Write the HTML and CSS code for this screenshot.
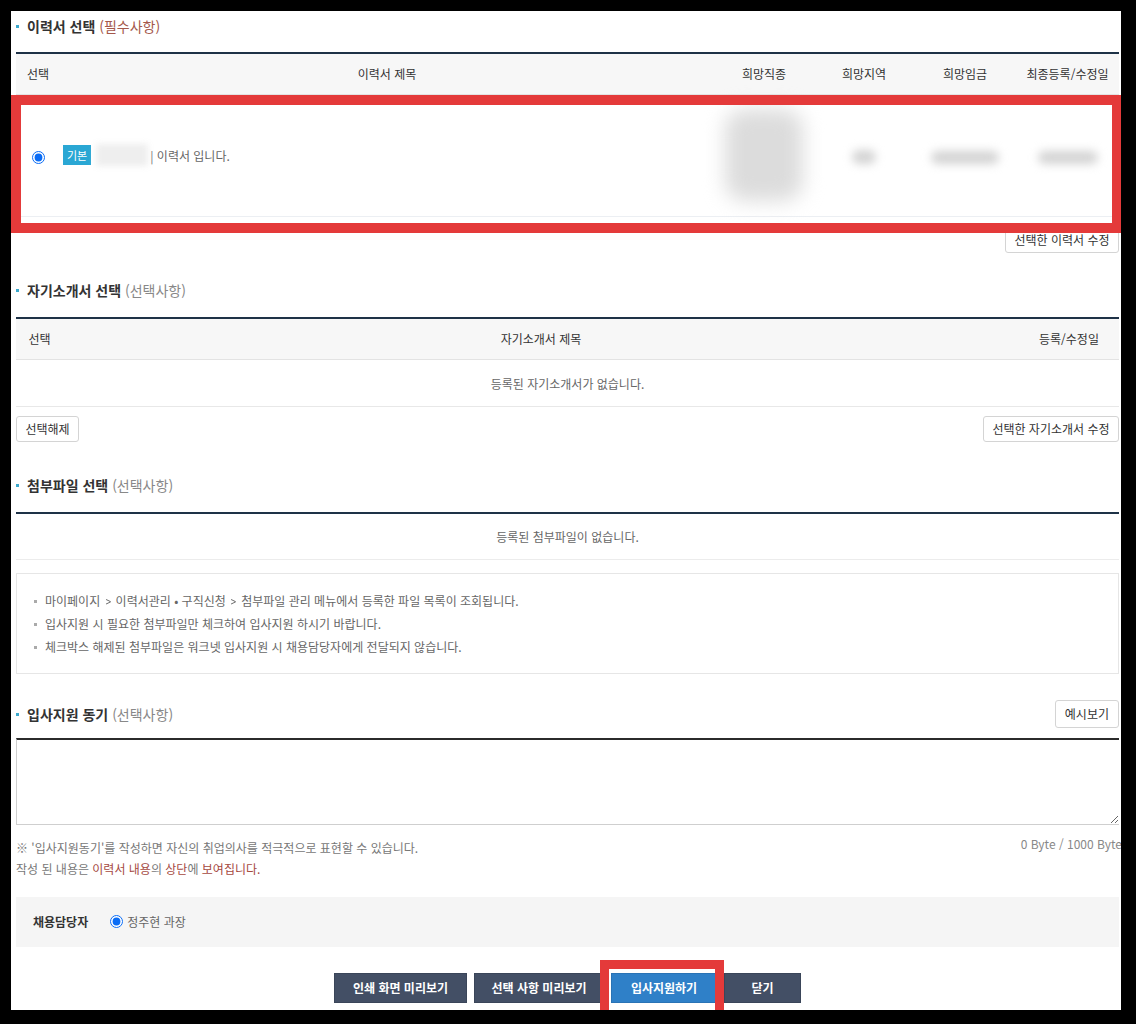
FILE: index.html
```html
<!DOCTYPE html>
<html lang="ko">
<head>
<meta charset="utf-8">
<title>입사지원</title>
<link rel="stylesheet" href="styles.css">
</head>
<body>
<div class="frame">
  <div class="page">

    <section class="sec sec-resume">
      <h2 class="sec-title">이력서 선택 <span class="req">(필수사항)</span></h2>
      <div class="table-wrap">
        <table class="list list-resume">
          <colgroup>
            <col class="c-sel"><col><col class="c-100"><col class="c-100"><col class="c-102"><col class="c-103">
          </colgroup>
          <thead>
            <tr><th>선택</th><th>이력서 제목</th><th>희망직종</th><th>희망지역</th><th>희망임금</th><th>최종등록/수정일</th></tr>
          </thead>
          <tbody>
            <tr class="resume-row">
              <td><input type="radio" class="radio" name="resume" checked></td>
              <td class="left"><span class="tag">기본</span><span class="blur-name"></span><span class="resume-name">| 이력서 입니다.</span></td>
              <td><span class="blur blur-job"></span></td>
              <td><span class="blur blur-area"></span></td>
              <td><span class="blur blur-pay"></span></td>
              <td><span class="blur blur-date"></span></td>
            </tr>
          </tbody>
        </table>
        <div class="mark mark-resume"></div>
      </div>
      <div class="btn-row end"><button class="btn-line">선택한 이력서 수정</button></div>
    </section>

    <section class="sec sec-intro">
      <h2 class="sec-title">자기소개서 선택 <span class="opt">(선택사항)</span></h2>
      <table class="list list-intro">
        <colgroup><col class="c-sel2"><col><col class="c-100"></colgroup>
        <thead><tr><th>선택</th><th>자기소개서 제목</th><th>등록/수정일</th></tr></thead>
        <tbody><tr class="empty-row"><td colspan="3">등록된 자기소개서가 없습니다.</td></tr></tbody>
      </table>
      <div class="btn-row between"><button class="btn-line">선택해제</button><button class="btn-line">선택한 자기소개서 수정</button></div>
    </section>

    <section class="sec sec-file">
      <h2 class="sec-title">첨부파일 선택 <span class="opt">(선택사항)</span></h2>
      <table class="list list-file">
        <tbody><tr class="empty-row file-row"><td>등록된 첨부파일이 없습니다.</td></tr></tbody>
      </table>
      <ul class="info-box">
        <li>마이페이지 <span class="chev">&gt;</span> 이력서관리 • 구직신청 <span class="chev">&gt;</span> 첨부파일 관리 메뉴에서 등록한 파일 목록이 조회됩니다.</li>
        <li>입사지원 시 필요한 첨부파일만 체크하여 입사지원 하시기 바랍니다.</li>
        <li>체크박스 해제된 첨부파일은 워크넷 입사지원 시 채용담당자에게 전달되지 않습니다.</li>
      </ul>
    </section>

    <section class="sec sec-motive">
      <div class="title-row">
        <h2 class="sec-title">입사지원 동기 <span class="opt">(선택사항)</span></h2>
        <button class="btn-line btn-example">예시보기</button>
      </div>
      <textarea class="motive"></textarea>
      <div class="note-row">
        <div class="notes">
          <p>※ '입사지원동기'를 작성하면 자신의 취업의사를 적극적으로 표현할 수 있습니다.</p>
          <p>작성 된 내용은 <span class="red">이력서 내용</span>의 <span class="red">상단</span>에 <span class="red">보여집니다.</span></p>
        </div>
        <div class="bytes">0 Byte / 1000 Byte</div>
      </div>
    </section>

    <div class="manager">
      <span class="manager-label">채용담당자</span>
      <label class="manager-opt"><input type="radio" class="radio" name="mgr" checked>정주현 과장</label>
    </div>

    <div class="actions">
      <button class="btn-dark b-print">인쇄 화면 미리보기</button>
      <button class="btn-dark b-sel">선택 사항 미리보기</button>
      <button class="btn-blue b-apply">입사지원하기</button>
      <button class="btn-dark b-close">닫기</button>
    </div>

  </div>
</div>
</body>
</html>
```

FILE: styles.css
```css
*, *::before, *::after { box-sizing: border-box; }
html, body { margin: 0; padding: 0; background: #000; }
body { font-family: "Noto Sans CJK KR", "Noto Sans", sans-serif; font-size: 12px; color: #333; }

.frame {
  width: 1110px;
  height: 999px;
  margin: 11px 0 0 11px;
  background: #fff;
  overflow: hidden;
}
.page { width: 1108px; padding: 5px 0 0 5px; }
.page > * { width: 1103px; }

.sec-title {
  position: relative;
  margin: 0;
  padding-left: 11px;
  font-size: 14px;
  line-height: 20px;
  font-weight: 700;
  color: #333;
}
.sec-title::before {
  content: "";
  position: absolute;
  left: 0; top: 9px;
  width: 3px; height: 3px;
  background: #3aa8cc;
}
.req { color: #a4584b; font-weight: 400; }
.opt { color: #888; font-weight: 400; }

.list {
  width: 100%;
  border-collapse: collapse;
  table-layout: fixed;
  border-top: 2px solid #1e3247;
  margin-top: 16px;
}
.list th {
  height: 41px;
  padding: 0;
  background: #f7f7f7;
  font-weight: 400;
  color: #333;
  border-bottom: 1px solid #e3e3e3;
  text-align: center;
}
.list td { padding: 0; text-align: center; color: #666; }
.c-sel { width: 44px; }
.c-sel2 { width: 47px; }
.c-100 { width: 100px; }
.c-102 { width: 102px; }
.c-103 { width: 103px; }

.resume-row td { height: 122px; border-bottom: 1px solid #eceff3; }
.resume-row td.left { text-align: left; padding-left: 3px; }
.radio {
  width: 13px; height: 13px; margin: 0;
  vertical-align: middle;
  accent-color: #0a6cf5;
}
.tag {
  display: inline-block;
  vertical-align: middle;
  height: 20px;
  line-height: 20px;
  padding: 0 4px;
  background: #2aa7d4;
  color: #fff;
  font-size: 11px;
}
.blur-name {
  display: inline-block;
  vertical-align: middle;
  width: 52px; height: 22px;
  margin: 0 2px 0 5px;
  background: #eeeeee;
  filter: blur(3px);
}
.resume-name { vertical-align: middle; color: #666; }
.blur { display: inline-block; vertical-align: middle; background: #d3d3d3; border-radius: 8px; }
.blur-job { width: 78px; height: 92px; background: #dcdcdc; border-radius: 20px; filter: blur(10px); }
.blur-area { width: 24px; height: 14px; filter: blur(5px); }
.blur-pay { width: 68px; height: 13px; filter: blur(5px); }
.blur-date { width: 60px; height: 13px; filter: blur(5px); }

.table-wrap { position: relative; }
.mark {
  position: absolute;
  border: 10px solid #e43a3a;
  pointer-events: none;
}
.mark-resume { left: -5px; top: 43px; width: 1111px; height: 138px; }

.btn-row { display: flex; }
.btn-row.end { justify-content: flex-end; margin-top: 10px; }
.btn-row.between { justify-content: space-between; margin-top: 9px; }
.btn-line {
  height: 26px;
  padding: 0 8.5px;
  border: 1px solid #d4d4d4;
  border-radius: 3px;
  background: #fff;
  font-family: inherit;
  font-size: 12px;
  color: #333;
  line-height: 24px;
}

.sec-intro { margin-top: 27px; }
.list-intro { margin-top: 17px; }
.list-intro th { height: 42px; }
.empty-row td { height: 47px; border-bottom: 1px solid #e8e8e8; color: #666; }

.sec-file { margin-top: 33px; }
.list-file { margin-top: 17px; }
.file-row td { height: 46px; border-bottom: 1px solid #ececec; }

.info-box {
  list-style: none;
  margin: 13px 0 0;
  padding: 15px 16px 15px 17px;
  border: 1px solid #e6e6e6;
  color: #666;
  line-height: 23px;
}
.info-box li { position: relative; padding-left: 11px; }
.info-box li::before {
  content: "";
  position: absolute;
  left: 0; top: 11px;
  width: 3px; height: 3px;
  background: #aaa;
}
.chev { display: inline-block; transform: scaleX(0.8); margin: 0 1px; }

.sec-motive { margin-top: 26px; }
.title-row { display: flex; justify-content: space-between; align-items: center; }
.btn-example { height: 28px; padding: 0 9px; }
.motive {
  display: block;
  width: 100%;
  height: 87px;
  margin-top: 10px;
  border: 1px solid #cfcfcf;
  border-top: 2px solid #2b2b2b;
  border-right: none;
  resize: vertical;
  font-family: inherit;
}
.note-row { display: flex; justify-content: space-between; align-items: flex-start; margin-top: 12px; }
.notes p { margin: 0; line-height: 21px; color: #777; }
.notes .red { color: #a5493f; }
.bytes { color: #888; line-height: 21px; margin-top: -4px; margin-right: -3px; white-space: nowrap; }

.manager {
  display: flex;
  align-items: center;
  height: 50px;
  margin-top: 18px;
  padding-left: 17px;
  background: #f5f5f5;
}
.manager-label { font-weight: 700; color: #333; margin-right: 22px; }
.manager-opt { display: flex; align-items: center; gap: 4px; color: #666; }

.actions {
  display: flex;
  justify-content: center;
  gap: 7px;
  margin-top: 26px;
}
.btn-dark, .btn-blue {
  height: 30px;
  border: 1px solid #3a4559;
  background: #434f65;
  color: #fff;
  font-family: inherit;
  font-size: 12px;
  font-weight: 700;
  padding: 0;
}
.btn-blue { background: #2f80c8; border-color: #2a73b5; position: relative; }
.b-print { width: 133px; }
.b-sel { width: 130px; }
.b-apply { width: 106px; }
.b-close { width: 77px; }
.b-apply::after {
  content: "";
  position: absolute;
  left: -12px; top: -14px;
  width: 124px; height: 70px;
  border: 9px solid #e43a3a;
}
```
